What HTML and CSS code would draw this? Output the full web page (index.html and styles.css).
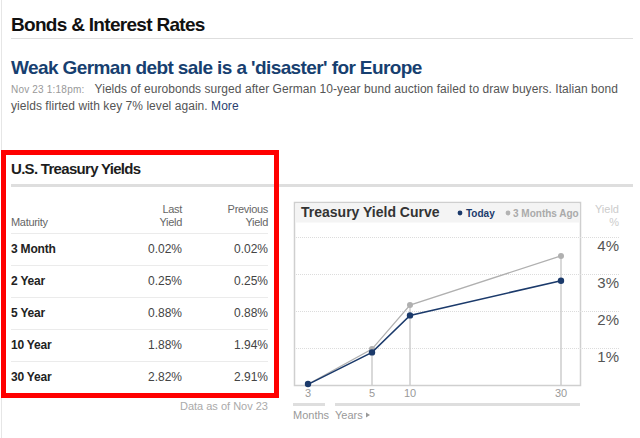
FILE: index.html
```html
<!DOCTYPE html>
<html>
<head>
<meta charset="utf-8">
<link rel="stylesheet" href="styles.css">
</head>
<body>
<div class="page">
  <h1 class="page-title">Bonds &amp; Interest Rates</h1>
  <h2 class="headline">Weak German debt sale is a 'disaster' for Europe</h2>
  <p class="summary"><span class="stamp">Nov 23 1:18pm:</span> Yields of eurobonds surged after German 10-year bund auction failed to draw buyers. Italian bond yields flirted with key 7% level again. <a class="more">More</a></p>

  <section class="yields">
    <h3 class="yields-title">U.S. Treasury Yields</h3>
    <div class="yields-body">
      <div class="table-col">
        <table class="yt">
          <thead>
            <tr><th class="c1">Maturity</th><th class="c2">Last<br>Yield</th><th class="c3">Previous<br>Yield</th></tr>
          </thead>
          <tbody>
            <tr><td class="c1">3 Month</td><td class="c2">0.02%</td><td class="c3">0.02%</td></tr>
            <tr><td class="c1">2 Year</td><td class="c2">0.25%</td><td class="c3">0.25%</td></tr>
            <tr><td class="c1">5 Year</td><td class="c2">0.88%</td><td class="c3">0.88%</td></tr>
            <tr><td class="c1">10 Year</td><td class="c2">1.88%</td><td class="c3">1.94%</td></tr>
            <tr><td class="c1">30 Year</td><td class="c2">2.82%</td><td class="c3">2.91%</td></tr>
          </tbody>
        </table>
        <div class="asof">Data as of Nov 23</div>
      </div>
      <div class="chart">
        <svg class="chart-svg" width="340" height="225" viewBox="0 0 340 225">
          <rect x="1.5" y="2.5" width="286" height="183" fill="#fff" stroke="#cfcfcf" stroke-width="1.5"/>
          <rect x="2.5" y="3.5" width="284" height="19" fill="#f4f4f4"/>
          <text class="ct-title" x="8" y="17">Treasury Yield Curve</text>
          <circle cx="167" cy="13" r="2.4" fill="#1b3a6b"/>
          <text class="ct-today" x="173" y="17">Today</text>
          <circle cx="215" cy="13" r="2.4" fill="#b3b3b3"/>
          <text class="ct-ago" x="220" y="17">3 Months Ago</text>
          <text class="ct-ylab" x="326" y="13" text-anchor="end">Yield</text>
          <text class="ct-ylab" x="326" y="26" text-anchor="end">%</text>
          <g stroke="#dcdcdc" stroke-width="1" stroke-dasharray="1 1">
            <line x1="3" y1="37.5" x2="327" y2="37.5"/>
            <line x1="3" y1="74.5" x2="327" y2="74.5"/>
            <line x1="3" y1="111.5" x2="327" y2="111.5"/>
            <line x1="3" y1="148.5" x2="327" y2="148.5"/>
          </g>
          <text class="ct-pct" x="326" y="51" text-anchor="end">4%</text>
          <text class="ct-pct" x="326" y="88" text-anchor="end">3%</text>
          <text class="ct-pct" x="326" y="125" text-anchor="end">2%</text>
          <text class="ct-pct" x="326" y="162" text-anchor="end">1%</text>
          <g stroke="#cdcdcd" stroke-width="1.5">
            <line x1="79" y1="149" x2="79" y2="185"/>
            <line x1="117" y1="105" x2="117" y2="185"/>
            <line x1="268" y1="56" x2="268" y2="185"/>
          </g>
          <polyline points="15,184.3 79,149.1 117,105.1 268,55.9" fill="none" stroke="#b0b0b0" stroke-width="1.3"/>
          <g fill="#b0b0b0">
            <circle cx="79" cy="149.1" r="3"/>
            <circle cx="117" cy="105.1" r="3"/>
            <circle cx="268" cy="55.9" r="3"/>
          </g>
          <polyline points="15,184.3 79,152.4 117,115.4 268,80.7" fill="none" stroke="#1b3a6b" stroke-width="1.5"/>
          <g fill="#1b3a6b">
            <circle cx="15" cy="184" r="3.2"/>
            <circle cx="79" cy="152.4" r="3.2"/>
            <circle cx="117" cy="115.4" r="3.2"/>
            <circle cx="268" cy="80.7" r="3.2"/>
          </g>
          <text class="ct-x" x="15" y="197" text-anchor="middle">3</text>
          <text class="ct-x" x="79" y="197" text-anchor="middle">5</text>
          <text class="ct-x" x="117" y="197" text-anchor="middle">10</text>
          <text class="ct-x" x="268" y="197" text-anchor="middle">30</text>
          <rect x="0" y="203" width="32" height="3" fill="#dedede"/>
          <rect x="42" y="203" width="245" height="3" fill="#dedede"/>
          <text class="ct-x" x="0" y="219">Months</text>
          <text class="ct-x" x="42" y="219">Years</text>
          <path d="M73 212.5 L77 215 L73 217.5 Z" fill="#999"/>
        </svg>
      </div>
    </div>
    <div class="highlight"></div>
  </section>
</div>
</body>
</html>
```
FILE: styles.css
```css
* { box-sizing: border-box; }
html, body { margin: 0; padding: 0; background: #fff; }
body { font-family: "Liberation Sans", Arial, sans-serif; color: #222; }
.page {
  margin-left: 1px;
  border-left: 1px solid #e6e6e6;
  min-height: 438px;
  padding: 13px 7px 0 9px;
  position: relative;
}
.page-title {
  margin: 0;
  font-size: 19px;
  letter-spacing: -0.7px;
  line-height: 24px;
  font-weight: bold;
  color: #111;
  padding-bottom: 1px;
  border-bottom: 1px solid #dedede;
}
.headline {
  margin: 16px 0 0;
  font-size: 19px;
  letter-spacing: -0.6px;
  line-height: 26px;
  font-weight: bold;
  color: #173f70;
}
.summary {
  margin: 0;
  font-size: 12px;
  line-height: 17px;
  color: #555;
  letter-spacing: 0.05px;
}
.stamp { font-size: 10px; color: #999; margin-right: 7px; letter-spacing: 0.2px; }
.more { color: #2b3f6f; }
.yields { position: relative; margin-top: 45px; }
.yields-title {
  margin: 0;
  font-size: 15px;
  letter-spacing: -0.7px;
  line-height: 18px;
  font-weight: bold;
  color: #1d1d1d;
  padding-bottom: 6px;
  border-bottom: 3px solid #dedede;
}
.yields-body { display: flex; align-items: flex-start; }
.table-col { width: 257px; margin-top: 16px; }
.yt { width: 257px; border-collapse: collapse; }
.yt th {
  font-size: 11px;
  letter-spacing: -0.3px;
  line-height: 13px;
  font-weight: normal;
  color: #666;
  padding: 0 0 4px;
  vertical-align: bottom;
  border-bottom: 1px solid #ebebeb;
}
.yt td {
  height: 32px;
  line-height: 31px;
  padding: 0;
  font-size: 12px;
  color: #444;
  border-bottom: 1px solid #ebebeb;
}
.yt .c1 { text-align: left; }
.yt td.c1 { font-weight: bold; color: #222; letter-spacing: -0.2px; }
.yt .c2 { text-align: right; width: 80px; }
.yt .c3 { text-align: right; width: 86px; }
.asof {
  margin-top: 6px;
  text-align: right;
  font-size: 11px;
  line-height: 13px;
  color: #aaa;
}
.chart { margin-left: 25px; margin-top: 13px; }
.chart-svg { display: block; }
.ct-title { font-size: 14px; font-weight: bold; fill: #333; }
.ct-today { font-size: 10px; font-weight: bold; fill: #1b3a6b; }
.ct-ago { font-size: 10px; font-weight: bold; fill: #aaa; }
.ct-ylab { font-size: 11px; fill: #ccc; }
.ct-pct { font-size: 15px; fill: #555; }
.ct-x { font-size: 11px; fill: #999; }
.highlight {
  position: absolute;
  left: -10px;
  top: -10px;
  width: 278px;
  height: 248px;
  border: 5px solid #f00;
  pointer-events: none;
}
```
